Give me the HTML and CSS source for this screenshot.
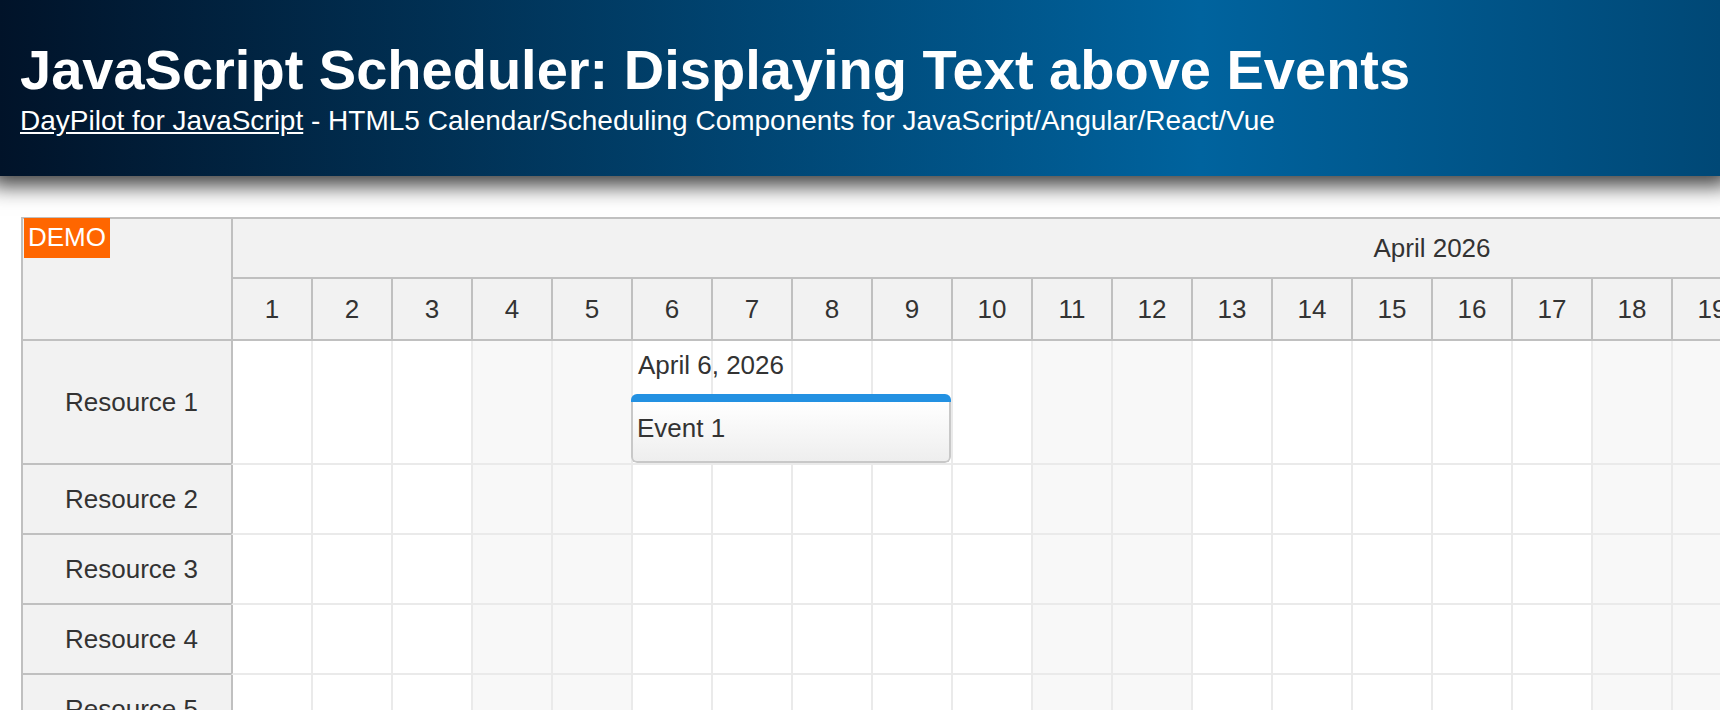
FILE: index.html
```html
<!DOCTYPE html>
<html lang="en">
<head>
<meta charset="utf-8">
<title>JavaScript Scheduler: Displaying Text above Events</title>
<link rel="stylesheet" href="styles.css">
</head>
<body>
<div class="header">
  <h1>JavaScript Scheduler: Displaying Text above Events</h1>
  <div class="sub"><a href="#">DayPilot for JavaScript</a> - HTML5 Calendar/Scheduling Components for JavaScript/Angular/React/Vue</div>
</div>
<div class="scheduler">
  <span class="demo">DEMO</span>
  <div class="head">
    <div class="corner"></div>
    <div class="timeheader">
      <div class="month">April 2026</div>
      <div class="days">
        <div class="day">1</div><div class="day">2</div><div class="day">3</div><div class="day">4</div><div class="day">5</div>
        <div class="day">6</div><div class="day">7</div><div class="day">8</div><div class="day">9</div><div class="day">10</div>
        <div class="day">11</div><div class="day">12</div><div class="day">13</div><div class="day">14</div><div class="day">15</div>
        <div class="day">16</div><div class="day">17</div><div class="day">18</div><div class="day">19</div><div class="day">20</div>
        <div class="day">21</div><div class="day">22</div><div class="day">23</div><div class="day">24</div><div class="day">25</div>
        <div class="day">26</div><div class="day">27</div><div class="day">28</div><div class="day">29</div><div class="day">30</div>
      </div>
    </div>
  </div>
  <div class="row row-tall">
    <div class="rowheader">Resource 1</div>
    <div class="cells">
      <div class="above">April 6, 2026</div>
      <div class="event">
        <div class="event-bar"></div>
        <div class="event-body">Event 1</div>
      </div>
    </div>
  </div>
  <div class="row">
    <div class="rowheader">Resource 2</div>
    <div class="cells"></div>
  </div>
  <div class="row">
    <div class="rowheader">Resource 3</div>
    <div class="cells"></div>
  </div>
  <div class="row">
    <div class="rowheader">Resource 4</div>
    <div class="cells"></div>
  </div>
  <div class="row">
    <div class="rowheader">Resource 5</div>
    <div class="cells"></div>
  </div>
  <div class="row">
    <div class="rowheader">Resource 6</div>
    <div class="cells"></div>
  </div>
</div>
</body>
</html>
```
FILE: styles.css
```css
html, body {
  margin: 0;
  padding: 0;
  overflow: hidden;
  background: #ffffff;
}

body {
  font-family: "Liberation Sans", Arial, sans-serif;
  color: #333333;
}

.header {
  position: relative;
  z-index: 2;
  padding: 39px 20px 39px;
  color: #ffffff;
  background: linear-gradient(to right, #011329 0%, #00639e 69.8%, #004876 100%);
  box-shadow: 0 0 20px 10px rgba(0, 0, 0, 0.75);
}

.header h1 {
  margin: 0;
  font-size: 56px;
  line-height: 62px;
  font-weight: bold;
  white-space: nowrap;
}

.header .sub {
  margin-top: 4px;
  font-size: 28px;
  line-height: 32px;
  white-space: nowrap;
}

.header .sub a {
  color: #ffffff;
  text-decoration: underline;
}

.scheduler {
  position: relative;
  width: max-content;
  margin: 41px 0 0 21px;
  border-top: 2px solid #c0c0c0;
  border-left: 2px solid #c0c0c0;
  font-size: 26px;
  line-height: 30px;
}

.demo {
  position: absolute;
  left: 1px;
  top: -1px;
  z-index: 3;
  padding: 4px 4px 6px;
  background: #ff6600;
  color: #ffffff;
}

.head {
  display: flex;
  border-bottom: 2px solid #c0c0c0;
}

.corner {
  width: 208px;
  background: #f2f2f2;
}

.timeheader {
  display: flex;
  flex-direction: column;
}

.month {
  box-sizing: border-box;
  width: 2400px;
  height: 58px;
  border-left: 2px solid #c0c0c0;
  background: #f2f2f2;
  display: flex;
  align-items: center;
  justify-content: center;
}

.days {
  display: flex;
  border-top: 2px solid #c0c0c0;
}

.day {
  box-sizing: border-box;
  width: 80px;
  height: 60px;
  border-left: 2px solid #c0c0c0;
  background: #f2f2f2;
  display: flex;
  align-items: center;
  justify-content: center;
}

.row {
  display: flex;
  height: 70px;
}

.row-tall {
  height: 124px;
}

.rowheader {
  box-sizing: border-box;
  width: 208px;
  padding-left: 42px;
  background: #f2f2f2;
  border-bottom: 2px solid #c0c0c0;
  display: flex;
  align-items: center;
}

.cells {
  position: relative;
  box-sizing: border-box;
  width: 2400px;
  border-left: 2px solid #c0c0c0;
  border-bottom: 2px solid #eaeaea;
  background-color: #ffffff;
  background-origin: border-box;
  background-image:
    repeating-linear-gradient(to right, #eaeaea 0px, #eaeaea 2px, transparent 2px, transparent 80px),
    repeating-linear-gradient(to right, transparent 0px, transparent 240px, #f8f8f8 240px, #f8f8f8 400px, transparent 400px, transparent 560px);
}

.above {
  position: absolute;
  left: 405px;
  top: 9px;
  white-space: nowrap;
}

.event {
  position: absolute;
  left: 398px;
  top: 53px;
  width: 320px;
  height: 69px;
  border-radius: 6px;
  overflow: hidden;
  display: flex;
  flex-direction: column;
}

.event-bar {
  height: 8px;
  background: #2391e2;
  flex: none;
}

.event-body {
  flex: 1;
  box-sizing: border-box;
  border: 2px solid #c8c8c8;
  border-top: none;
  border-radius: 0 0 6px 6px;
  padding: 11px 4px 0;
  background: linear-gradient(to bottom, #ffffff 0%, #eeeeee 100%);
  white-space: nowrap;
}
```
